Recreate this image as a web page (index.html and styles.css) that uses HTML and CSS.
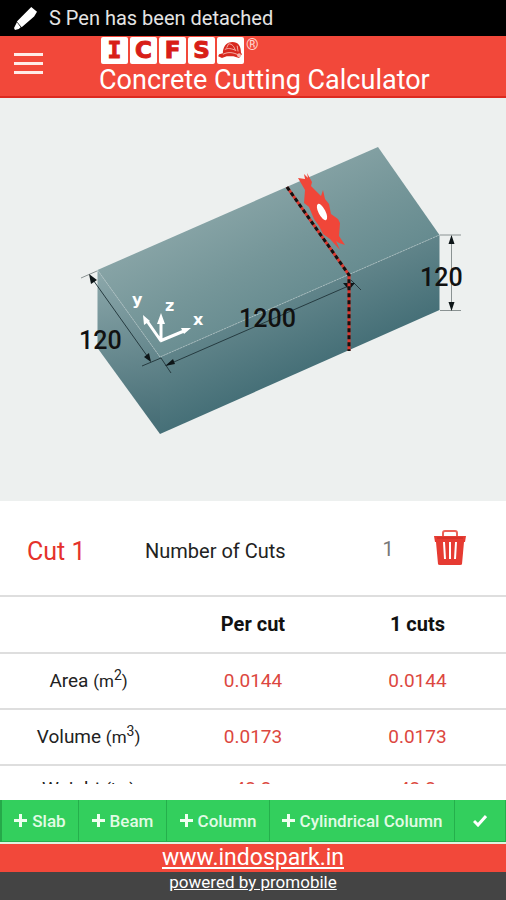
FILE: index.html
```html
<!DOCTYPE html>
<html lang="en">
<head>
<meta charset="utf-8">
<meta name="viewport" content="width=device-width, initial-scale=1">
<title>Concrete Cutting Calculator</title>
<link rel="stylesheet" href="styles.css">
</head>
<body>
<div class="status">
  <svg class="pen" viewBox="0 0 24 24" aria-hidden="true"><path fill="#fff" d="M18 0 24 5 21 10 8 21 3 15ZM3 16 7 21 5 23 1 24 0 22Z"/></svg>
  <span>S Pen has been detached</span>
</div>
<header class="header">
  <button class="menu" type="button" aria-label="Menu"><i></i><i></i><i></i></button>
  <div class="brand">
    <div class="logo">
      <span class="tile slab">I</span><span class="tile">C</span><span class="tile">F</span><span class="tile">S</span>
      <span class="tile"><svg class="helmet" viewBox="0 0 26 20" aria-hidden="true"><path fill="#d8281f" d="M5 11C6 4 10 1 15 1 21 1 24 5 24 12L25 14 22 18 16 16 9 16 4 18 0 16 1 14 5 13Z"/><path d="M7 9c3-2 7-1 12 1M11 3c4 0 6 3 7 7M5 14c6-3 11-2 17 1M9 7l2-4M20 5l1 6" fill="none" stroke="#f6b4ac" stroke-width="1"/><circle cx="22" cy="15" r="2" fill="#f6b4ac"/></svg></span>
      <span class="reg">®</span>
    </div>
    <h1 class="title">Concrete Cutting Calculator</h1>
  </div>
</header>
<main class="main">
  <svg class="diagram" viewBox="0 98 506 403" role="img" aria-label="Slab cutting diagram">
    <defs>
      <linearGradient id="top" gradientUnits="userSpaceOnUse" x1="205" y1="190" x2="285" y2="345">
        <stop offset="0" stop-color="#8da8aa"/><stop offset=".5" stop-color="#759699"/><stop offset="1" stop-color="#5f868b"/>
      </linearGradient>
      <linearGradient id="side" gradientUnits="userSpaceOnUse" x1="270" y1="290" x2="306" y2="372">
        <stop offset="0" stop-color="#67898e"/><stop offset="1" stop-color="#456f77"/>
      </linearGradient>
      <linearGradient id="end" gradientUnits="userSpaceOnUse" x1="110" y1="275" x2="135" y2="425">
        <stop offset="0" stop-color="#8aa6a9"/><stop offset="1" stop-color="#486f77"/>
      </linearGradient>
    </defs>
    <path d="M97.500 270 378 147 439.500 235 160 357Z" fill="url(#top)"/>
    <path d="M97.500 270 160 357V434L97.500 348Z" fill="url(#end)"/>
    <path d="M160 357 439.500 235V310L160 434Z" fill="url(#side)"/>
    <path d="M97.500 270 160 357 439.500 235" fill="none" stroke="#b2c3c4" stroke-width="1" stroke-dasharray="2 1" opacity=".75"/>
    <g fill="none" stroke="#263b40" stroke-width="1">
      <path d="M91 277 150 360M142 366 161 358 171 373M167 365 353 284M351 280 361 290"/>
      <path d="M81 278 97 271M440 235H461M440 310.500H461M451.500 236V310" stroke="#8a9292"/>
    </g>
    <g fill="#0d1517">
      <path d="M89 274 97 280 91 284ZM151 362 144 357 149 353ZM165 366 173 359 175 364ZM355 283 343 283 349 290Z"/>
      <path d="M451.500 235 448.500 244H454.500ZM451.500 311 448.500 302H454.500Z"/>
    </g>
    <g fill="none" stroke-width="3">
      <path d="M287 187 349 275V351" stroke="#db382f"/>
      <path d="M287 187 349 275V351" stroke="#111" stroke-dasharray="4 3"/>
    </g>
    <path fill="#f04639" d="M298 178 305 179 304 174 308 178 307 173 312 182 311 186 321 196 323 190 325 199 329 204 331 214 338 219 340 223 339 236 345 245 339 243 336 241 340 250 330 239 323 234 319 226 314 219 309 207 304 203 305 190Z"/>
    <ellipse cx="322" cy="212" rx="3.500" ry="9" transform="rotate(-27 322 212)" fill="#fff"/>
    <g stroke="#fff" stroke-width="3" fill="none"><path d="M161 340V322M161 341 147 321M160 341 184 331"/></g>
    <path fill="#fff" d="M161 313 157 324H165ZM143 315 144 325 150 321ZM191 328 181 328 184 334Z"/>
    <g class="axis"><text x="132" y="305">y</text><text x="165" y="311">z</text><text x="193" y="325">x</text></g>
    <g class="dims"><text x="79" y="349">120</text><text x="239" y="327">1200</text><text x="420" y="286">120</text></g>
  </svg>
  <section class="cut">
    <h2 class="cut-name">Cut 1</h2>
    <label class="cut-label" for="cuts">Number of Cuts</label>
    <input class="cut-input" id="cuts" type="text" inputmode="numeric" value="1">
    <button class="trash" type="button" aria-label="Delete cut">
      <svg viewBox="0 0 32 36" aria-hidden="true"><path d="M9 6V3Q9 1 11 1H21Q23 1 23 3V6" fill="none" stroke="#ed6258" stroke-width="2"/><path fill="#e63b32" d="M0 6H32L31 12H30L28 34Q28 35 26 35H6Q4 35 4 34L2 12H1Z"/><path stroke="#fff" stroke-width="2" d="M10 12 11 29M16 12V29M22 12 21 29"/><path d="M3 8H29" stroke="#cb2a23"/></svg>
    </button>
  </section>
  <table class="results">
    <thead><tr><td></td><th scope="col">Per cut</th><th scope="col">1 cuts</th></tr></thead>
    <tbody>
      <tr><th scope="row">Area <small>(m<sup>2</sup>)</small></th><td>0.0144</td><td>0.0144</td></tr>
      <tr><th scope="row">Volume <small>(m<sup>3</sup>)</small></th><td>0.0173</td><td>0.0173</td></tr>
      <tr class="last"><th scope="row">Weight <small>(kg)</small></th><td>42.2</td><td>42.2</td></tr>
    </tbody>
  </table>
</main>
<nav class="toolbar">
  <button type="button"><svg class="plus" viewBox="0 0 13 13" aria-hidden="true"><path d="M6.500 0V13M0 6.500H13"/></svg>Slab</button>
  <button type="button"><svg class="plus" viewBox="0 0 13 13" aria-hidden="true"><path d="M6.500 0V13M0 6.500H13"/></svg>Beam</button>
  <button type="button"><svg class="plus" viewBox="0 0 13 13" aria-hidden="true"><path d="M6.500 0V13M0 6.500H13"/></svg>Column</button>
  <button type="button"><svg class="plus" viewBox="0 0 13 13" aria-hidden="true"><path d="M6.500 0V13M0 6.500H13"/></svg>Cylindrical Column</button>
  <button type="button" aria-label="Done"><svg class="check" viewBox="0 0 14 12" aria-hidden="true"><path d="M1 6 5 10 13 1"/></svg></button>
</nav>
<footer>
  <div class="site"><a href="#site">www.indospark.in</a></div>
  <div class="powered"><a href="#promobile">powered by promobile</a></div>
</footer>
</body>
</html>
```
FILE: styles.css
```css
* { box-sizing: border-box; }
body {
  margin: 0;
  height: 100vh;
  display: flex;
  flex-direction: column;
  background: #fff;
  color: #222;
  font-family: Roboto, "Liberation Sans", sans-serif;
}
button { border: 0; padding: 0; background: none; color: inherit; font: inherit; }
h1, h2 { margin: 0; font-weight: 400; }

.status {
  display: flex;
  align-items: center;
  gap: 12px;
  height: 36px;
  padding-left: 14px;
  background: #000;
  color: #e4e4e4;
  font-size: 20px;
}
.pen { width: 23px; height: 23px; }

.header {
  display: flex;
  align-items: flex-start;
  gap: 56px;
  height: 62px;
  padding-left: 14px;
  background: #f2483a;
  border-bottom: 2px solid #dc2a20;
  color: #fff;
}
.menu {
  display: flex;
  flex-direction: column;
  gap: 6px;
  width: 29px;
  margin-top: 17px;
}
.menu i { height: 3px; width: 100%; background: #ffece8; }
.brand { display: flex; flex-direction: column; }
.logo { display: flex; gap: 2px; height: 29px; padding: 1px 2px; }
.tile {
  display: flex;
  align-items: center;
  justify-content: center;
  width: 27px;
  height: 27px;
  border-radius: 2px;
  background: #fff;
  color: #d81e18;
  font: bold 23px/27px "DejaVu Sans", sans-serif;
  -webkit-text-stroke: 1px #d81e18;
}
.slab { font-family: "DejaVu Sans Mono", monospace; }
.helmet { width: 25px; height: 19px; }
.reg { font-size: 16px; line-height: 16px; color: #ffd5cf; }
.title { font-size: 27px; line-height: 30px; white-space: nowrap; }

.main { flex: 1; min-height: 0; overflow: hidden; margin-bottom: 16px; }
.diagram { display: block; width: 100%; background: #edf0ef; }
.axis { fill: #fff; font: bold 16px "DejaVu Sans", sans-serif; }
.dims { fill: #111; font-size: 25px; font-weight: 500; }

.cut {
  display: grid;
  grid-template-columns: 118fr 215fr 60fr 60fr;
  align-items: center;
  height: 96px;
  padding: 6px 26px 0 27px;
  border-bottom: 2px solid #dedede;
}
.cut-name { color: #e5322b; font-size: 25px; }
.cut-label { font-size: 20px; }
.cut-input {
  width: 56px;
  border: 0;
  padding: 0 0 4px;
  background: none;
  color: #777;
  text-align: center;
  font: 20px Roboto, sans-serif;
}
.trash { justify-self: center; width: 32px; height: 36px; margin-bottom: 6px; }
.trash svg { display: block; width: 32px; height: 36px; }

.results { width: 100%; table-layout: fixed; border-collapse: collapse; text-align: center; font-size: 19px; }
.results td, .results th { width: 30%; height: 56px; padding: 0 0 2px; border-bottom: 2px solid #dedede; font-weight: 400; }
.results tr > :first-child { width: 35%; }
.results tr > :last-child { width: 35%; }
.results td { color: #dc4740; }
.results thead th { font-size: 20px; font-weight: 700; color: #111; }
.results small { font-size: 17px; }
.results sup { font-size: 14px; line-height: 0; }
.results .last > * { height: 48px; border: 0; }

.toolbar {
  display: grid;
  grid-template-columns: 77fr 88fr 103fr 185fr 51fr;
  height: 44px;
  padding-left: 2px;
  border-bottom: 2px solid #dff3df;
  background: #25a849;
}
.toolbar button {
  display: flex;
  align-items: center;
  justify-content: center;
  gap: 5px;
  border-right: 1px solid #25b04c;
  border-bottom: 1px solid #25b04c;
  background: #33cf5d;
  color: #e2fbe5;
  font-size: 17px;
  font-weight: 500;
  white-space: nowrap;
}
.plus { width: 13px; height: 13px; fill: none; stroke: #effff0; stroke-width: 3; }
.check { width: 14px; height: 12px; fill: none; stroke: #fff; stroke-width: 3; }

footer { text-align: center; color: #fff; }
footer a { color: inherit; }
.site { height: 28px; background: #f2483a; font-size: 23px; line-height: 28px; }
.powered { height: 28px; background: #444; font-size: 17px; line-height: 20px; }
```
